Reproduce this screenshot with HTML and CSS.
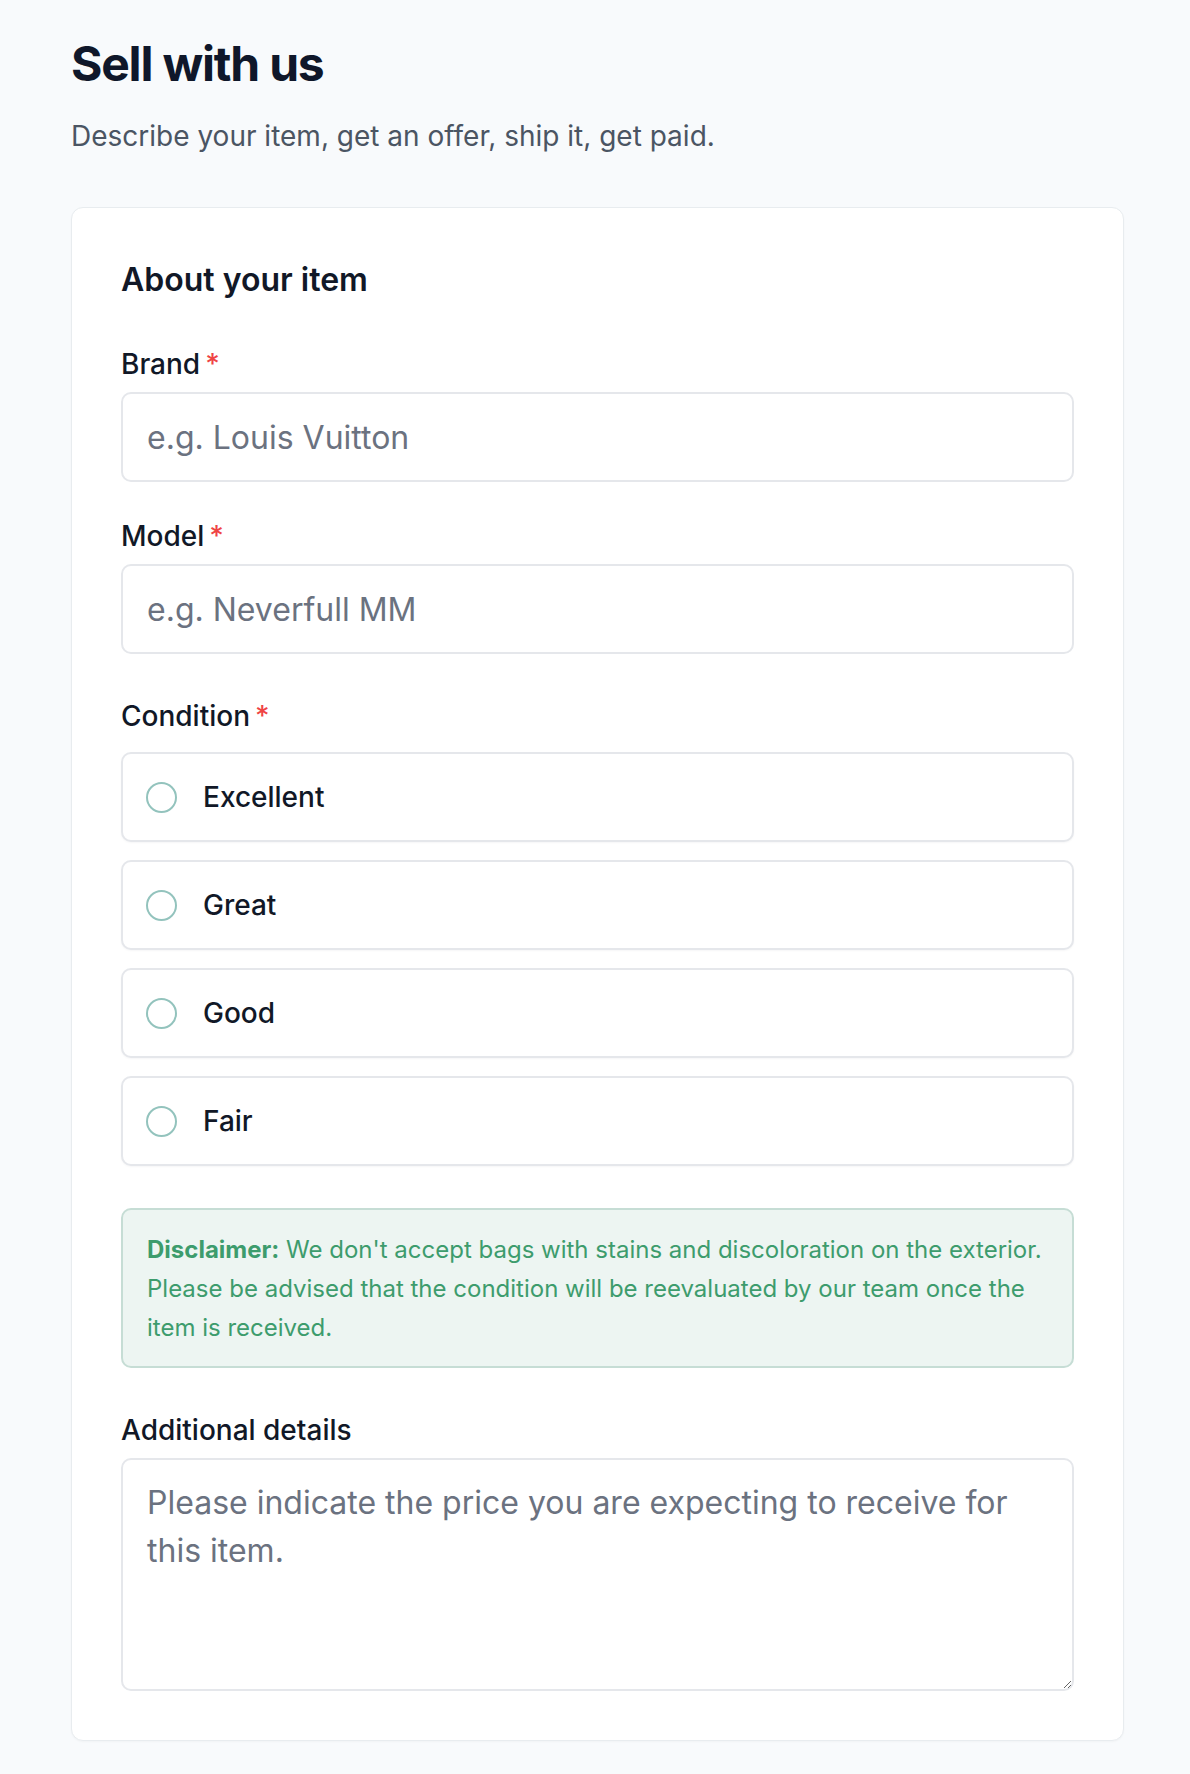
FILE: index.html
```html
<!DOCTYPE html>
<html lang="en">
<head>
<meta charset="utf-8">
<title>Sell with us</title>
<link rel="stylesheet" href="styles.css">
</head>
<body>
<main class="page">
  <h1 class="title">Sell with us</h1>
  <p class="subtitle">Describe your item, get an offer, ship it, get paid.</p>
  <form class="card">
    <h2 class="card-title">About your item</h2>

    <label class="label" for="brand">Brand<span class="req">*</span></label>
    <input class="input" id="brand" type="text" placeholder="e.g. Louis Vuitton">

    <label class="label label-gap" for="model">Model<span class="req">*</span></label>
    <input class="input" id="model" type="text" placeholder="e.g. Neverfull MM">

    <div class="label label-condition">Condition<span class="req">*</span></div>
    <div class="options">
      <label class="option"><span class="radio"></span><span class="option-text">Excellent</span></label>
      <label class="option"><span class="radio"></span><span class="option-text">Great</span></label>
      <label class="option"><span class="radio"></span><span class="option-text">Good</span></label>
      <label class="option"><span class="radio"></span><span class="option-text">Fair</span></label>
    </div>

    <p class="disclaimer"><strong>Disclaimer:</strong> We don't accept bags with stains and discoloration on the exterior. Please be advised that the condition will be reevaluated by our team once the item is received.</p>

    <label class="label label-details" for="details">Additional details</label>
    <textarea class="textarea" id="details" placeholder="Please indicate the price you are expecting to receive for this item."></textarea>
  </form>
</main>
</body>
</html>
```
FILE: styles.css
```css
* { box-sizing: border-box; }
html, body { margin: 0; padding: 0; }
body {
  background: #f8fafc;
  font-family: Inter, "Noto Sans", "Liberation Sans", sans-serif;
  color: #111827;
}
.page {
  padding: 35px 0 33px 71px;
}
.title {
  margin: 0;
  font-size: 48px;
  line-height: 58px;
  font-weight: 700;
  letter-spacing: -0.025em;
  color: #0f172a;
}
.subtitle {
  margin: 22px 0 0;
  font-size: 28px;
  line-height: 42px;
  color: #4b5563;
}
.card {
  margin-top: 50px;
  width: 1053px;
  background: #fff;
  border: 1px solid #e8ecef;
  border-radius: 12px;
  padding: 49px;
  display: flex;
  flex-direction: column;
  box-shadow: 0 1px 2px rgba(15, 23, 42, 0.03);
}
.card-title {
  margin: 0 0 43px;
  font-size: 32px;
  line-height: 46px;
  font-weight: 600;
  color: #111827;
}
.label {
  display: block;
  font-size: 28px;
  line-height: 36px;
  font-weight: 500;
  color: #111827;
  margin-bottom: 10px;
}
.label-gap { margin-top: 36px; }
.label-condition { margin-top: 44px; margin-bottom: 18px; }
.label-details { margin-top: 44px; }
.req {
  color: #ef4444;
  margin-left: 5px;
}
.input {
  display: block;
  width: 100%;
  height: 90px;
  border: 2px solid #e5e7eb;
  border-radius: 10px;
  padding: 0 24px;
  font-family: inherit;
  font-size: 32px;
  color: #111827;
  background: #fff;
  outline: none;
}
.input::placeholder, .textarea::placeholder { color: #6b7280; opacity: 1; }
.options {
  display: flex;
  flex-direction: column;
  gap: 18px;
}
.option {
  display: flex;
  align-items: center;
  gap: 26px;
  height: 90px;
  padding: 0 23px;
  border: 2px solid #e5e7eb;
  border-radius: 10px;
  background: #fff;
  box-shadow: 0 1px 2px rgba(15, 23, 42, 0.04);
}
.radio {
  width: 31px;
  height: 31px;
  border-radius: 50%;
  border: 2px solid #93c3bd;
  flex: none;
}
.option-text {
  font-size: 28px;
  line-height: 40px;
  font-weight: 500;
  color: #111827;
}
.disclaimer {
  margin: 42px 0 0;
  background: #edf5f2;
  border: 2px solid #c6ddd5;
  border-radius: 10px;
  padding: 20px 24px 19px;
  font-size: 24px;
  line-height: 39px;
  color: #3d9c6d;
}
.disclaimer strong { font-weight: 700; }
.textarea {
  display: block;
  width: 100%;
  height: 233px;
  border: 2px solid #e5e7eb;
  border-radius: 10px;
  padding: 19px 24px;
  font-family: inherit;
  font-size: 32px;
  line-height: 48px;
  color: #111827;
  background: #fff;
  outline: none;
  resize: vertical;
}
```
